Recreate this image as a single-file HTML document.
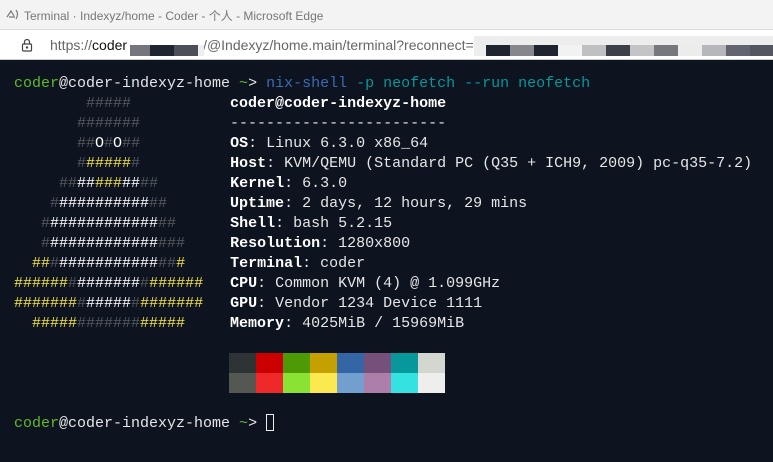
<!DOCTYPE html><html><head><style>
body{margin:0;width:773px;height:462px;overflow:hidden;background:#0e1320;font-family:"Liberation Sans","Noto Sans CJK SC",sans-serif}
#title{position:absolute;left:0;top:0;width:773px;height:29px;background:#f3f3f3;color:#777;font-size:12px}
#title span{position:absolute;left:24px;top:7px}
#addr{position:absolute;left:0;top:29px;width:773px;height:31px;background:#fff;border-top:1px solid #ddd;border-bottom:1px solid #ccc;box-sizing:border-box}
#addr .u{position:absolute;left:50px;top:7px;font-size:14px;color:#666}
.b{position:absolute}
#term{position:absolute;left:14px;top:74px;font-family:"Liberation Mono",monospace;font-size:15px;line-height:20px;color:#e6e6e6;white-space:pre}
.g{color:#5fb92a}.w{color:#fff}.d{color:#555a60}.y{color:#f3e33a}.bl{color:#3a6bb5}.t{color:#06989a}
b{color:#fff}
.sw{position:absolute;width:27px;height:20px}
</style></head><body>
<div id="title"><svg style="position:absolute;left:6px;top:8px" width="14" height="13" viewBox="0 0 14 13" fill="none" stroke="#777" stroke-width="1.2"><path d="M1 9 L5 3 L8 8 M3 9 h6"/><path d="M10 2 q3 4 0 9"/></svg><span>Terminal · Indexyz/home - Coder - 个人 - Microsoft Edge</span></div>
<div id="addr">
<svg style="position:absolute;left:21px;top:8px" width="12" height="14" viewBox="0 0 12 14" fill="none" stroke="#444" stroke-width="1.2"><rect x="1.5" y="6" width="9" height="7" rx="1"/><path d="M3.5 6V4a2.5 2.5 0 0 1 5 0v2"/><circle cx="6" cy="9.5" r=".6" fill="#444"/></svg>
<div class="u">https://<span style="color:#111">coder</span><span style="display:inline-block;width:76px"></span>/@Indexyz/home.main/terminal?reconnect=</div>
<div class="b" style="left:130px;top:15px;width:20px;height:11px;background:#75767d"></div>
<div class="b" style="left:150px;top:15px;width:24px;height:11px;background:#1f2530"></div>
<div class="b" style="left:174px;top:15px;width:24px;height:11px;background:#4c4e58"></div>
<div class="b" style="left:198px;top:15px;width:6px;height:11px;background:#eee"></div>
<div class="b" style="left:474px;top:6px;width:299px;height:9px;background:#ededed"></div>
<div class="b" style="left:474px;top:15px;width:299px;height:11px;background:linear-gradient(90deg,#eee 0 12px,#1f2530 12px 36px,#85878c 36px 60px,#1f2530 60px 84px,#f2f2f2 84px 108px,#bfc0c2 108px 132px,#3d4049 132px 156px,#c4c4c6 156px 180px,#76787e 180px 204px,#ececec 204px 228px,#b6b7ba 228px 252px,#626470 252px 276px,#545760 276px)"></div>
</div>
<div id="term"><span class="g">coder</span>@coder-indexyz-home <span class="g">~</span>&gt; <span class="bl">nix-shell</span> <span class="t">-p neofetch --run neofetch</span>
<span class="d">        #####           </span><b>coder@coder-indexyz-home</b>
<span class="d">       #######          </span>------------------------
<span class="d">       ##</span><span class="w">O</span><span class="d">#</span><span class="w">O</span><span class="d">##          </span><b>OS</b>: Linux 6.3.0 x86_64
<span class="d">       #</span><span class="y">#####</span><span class="d">#          </span><b>Host</b>: KVM/QEMU (Standard PC (Q35 + ICH9, 2009) pc-q35-7.2)
<span class="d">     ##</span><span class="w">##</span><span class="y">###</span><span class="w">##</span><span class="d">##        </span><b>Kernel</b>: 6.3.0
<span class="d">    #</span><span class="w">##########</span><span class="d">##       </span><b>Uptime</b>: 2 days, 12 hours, 29 mins
<span class="d">   #</span><span class="w">############</span><span class="d">##      </span><b>Shell</b>: bash 5.2.15
<span class="d">   #</span><span class="w">############</span><span class="d">###     </span><b>Resolution</b>: 1280x800
<span class="y">  ##</span><span class="d">#</span><span class="w">###########</span><span class="d">##</span><span class="y">#     </span><b>Terminal</b>: coder
<span class="y">######</span><span class="d">#</span><span class="w">#######</span><span class="d">#</span><span class="y">######   </span><b>CPU</b>: Common KVM (4) @ 1.099GHz
<span class="y">#######</span><span class="d">#</span><span class="w">#####</span><span class="d">#</span><span class="y">#######   </span><b>GPU</b>: Vendor 1234 Device 1111
<span class="y">  #####</span><span class="d">#######</span><span class="y">#####     </span><b>Memory</b>: 4025MiB / 15969MiB




<span class="g">coder</span>@coder-indexyz-home <span class="g">~</span>&gt; <span style="display:inline-block;width:8px;height:17px;border:1px solid #eee;vertical-align:-4px;box-sizing:border-box"></span></div>
<div class="sw" style="left:229px;top:353px;background:#2e3436"></div><div class="sw" style="left:256px;top:353px;background:#cc0000"></div><div class="sw" style="left:283px;top:353px;background:#4e9a06"></div><div class="sw" style="left:310px;top:353px;background:#c4a000"></div><div class="sw" style="left:337px;top:353px;background:#3465a4"></div><div class="sw" style="left:364px;top:353px;background:#75507b"></div><div class="sw" style="left:391px;top:353px;background:#06989a"></div><div class="sw" style="left:418px;top:353px;background:#d3d7cf"></div>
<div class="sw" style="left:229px;top:373px;background:#555753"></div><div class="sw" style="left:256px;top:373px;background:#ef2929"></div><div class="sw" style="left:283px;top:373px;background:#8ae234"></div><div class="sw" style="left:310px;top:373px;background:#fce94f"></div><div class="sw" style="left:337px;top:373px;background:#729fcf"></div><div class="sw" style="left:364px;top:373px;background:#ad7fa8"></div><div class="sw" style="left:391px;top:373px;background:#34e2e2"></div><div class="sw" style="left:418px;top:373px;background:#eeeeec"></div>
</body></html>
